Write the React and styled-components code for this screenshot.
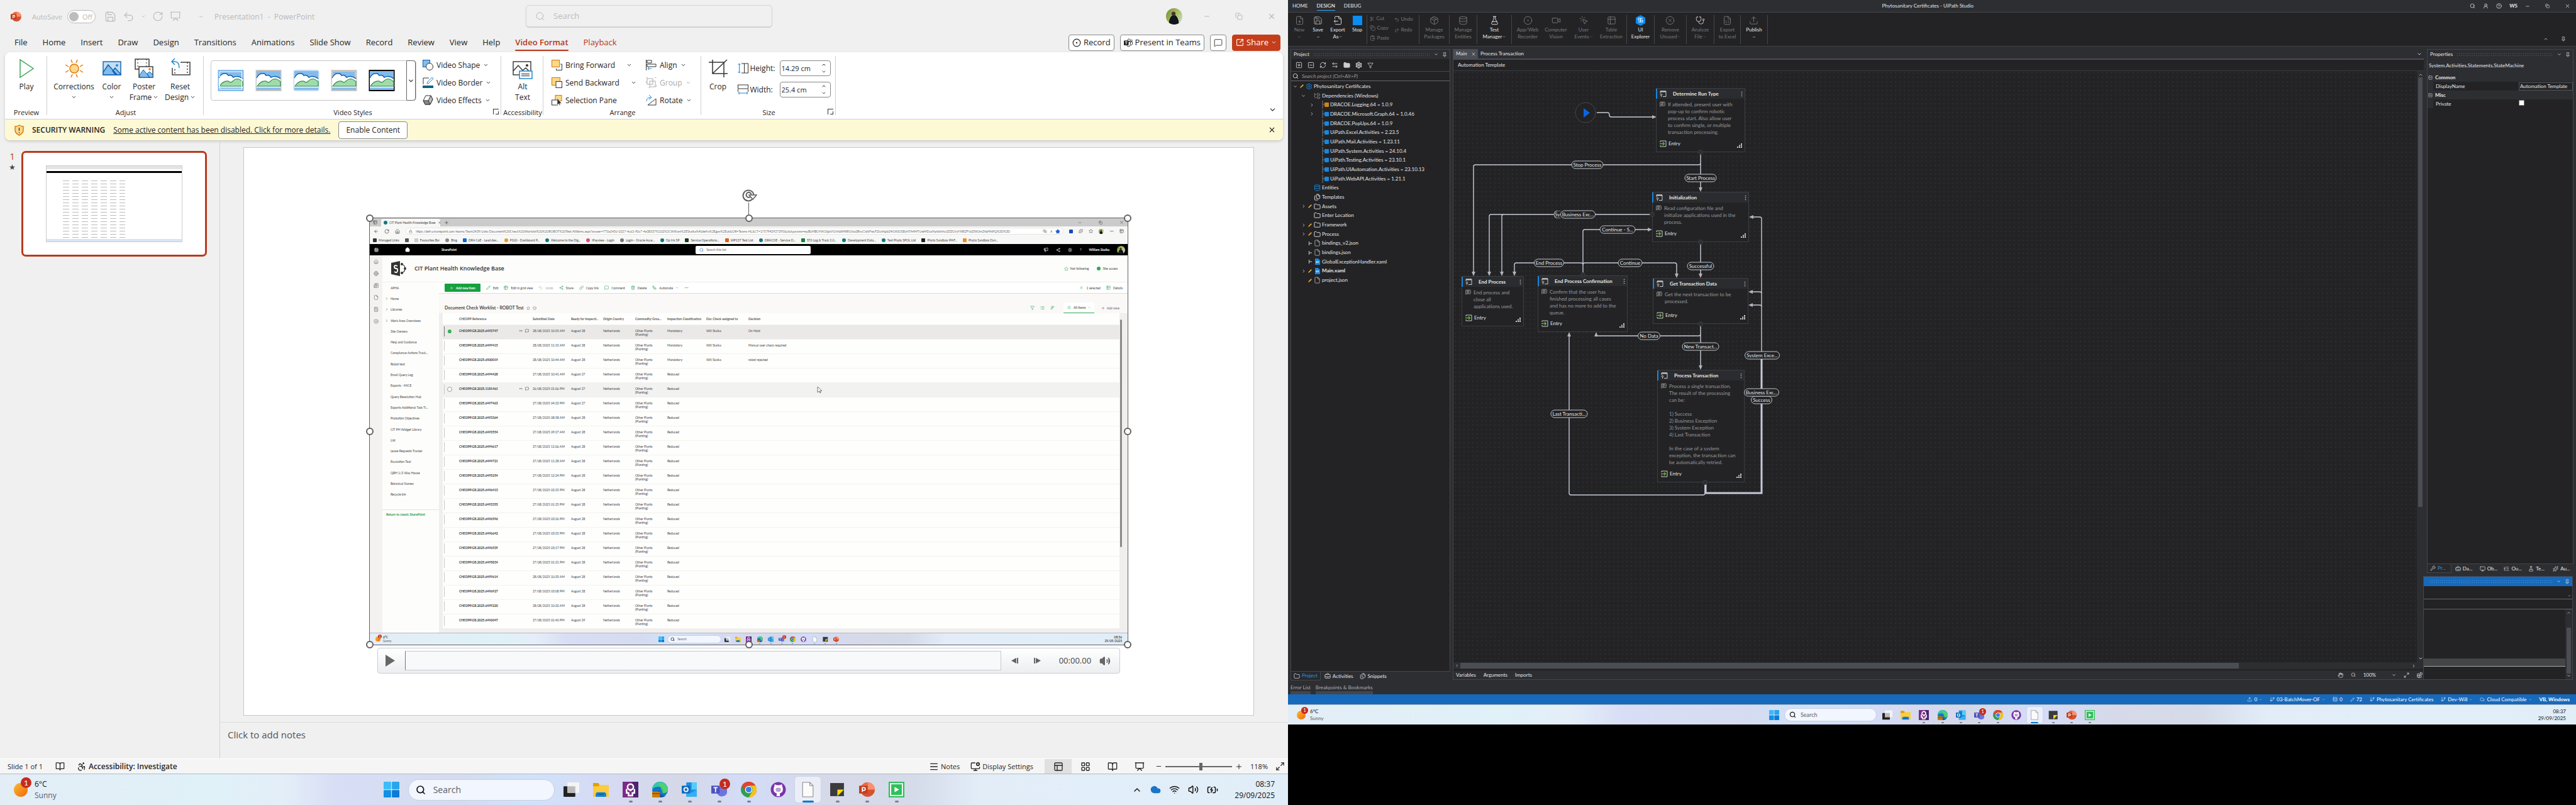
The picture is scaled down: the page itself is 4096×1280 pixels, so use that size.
import React from "react";
import styled, { createGlobalStyle, css } from "styled-components";
import {
  Save, Undo2, RotateCw, Presentation, Search, Minus, X, Copy, ChevronDown, ChevronUp, ChevronRight, ChevronLeft,
  BookOpen, Accessibility, LayoutGrid, Maximize2, Wifi, Volume2, BatteryCharging, Menu, MonitorCog,
  PanelsTopLeft, FilePlus, FileOutput, Scissors, ClipboardPaste, Redo2, Package, Database, FlaskConical,
  CircleDot, Video, MousePointerClick, Table2, CircleX, Stethoscope, FileSpreadsheet, Upload, Pin, Folder,
  Settings, Funnel, RefreshCw, ArrowLeftRight, SquarePlus, SquareMinus, MessageSquareText, Hand, Wrench,
  BriefcaseBusiness, ListTree, Sparkles, Monitor, CircleHelp, UserRound, Pencil, Cloud, GitBranch, Files,
  ArrowLeft, House, Lock, Plus, Globe, Star, Grid3x3, Share2, Link, MessageSquare, Trash2, Workflow, Ellipsis,
  ArrowDownWideNarrow, List, Newspaper, File, Calculator, CirclePlus, Megaphone, EyeOff, Puzzle, SquareArrowOutUpRight,
  Rows3, Blocks, FolderTree, CircleCheck,
} from "lucide-react";

const UI = `"Open Sans", "Noto Sans", sans-serif`;
const SMALL = `Lato, "Open Sans", sans-serif`;

const Global = createGlobalStyle`
  html, body, #root { height: 100%; }
  body { margin: 0; background: #000; font-family: ${UI}; }
  *, *::before, *::after { box-sizing: border-box; }
  button, input, select { font: inherit; color: inherit; margin: 0; }
  button { background: none; border: 0; padding: 0; }
  svg { display: block; flex: none; }
  a { color: inherit; }
`;

const Desktop = styled.div`display: flex; min-height: 100vh; white-space: nowrap;`;
const Spacer = styled.div`flex: 1;`;
const Gap = styled.div`flex: 0 0 ${(p) => p.$w}px;`;

/* ------------------------------------------------------------ app icons */
const Ic = ({ s, children }) => <svg width={s} height={s} viewBox="0 0 24 24">{children}</svg>;

const apps = {
  win: (s) => (
    <Ic s={s}><rect x="0" y="0" width="11.4" height="11.4" rx="1" fill="#3cbcf8" /><rect x="12.6" y="0" width="11.4" height="11.4" rx="1" fill="#29a5ee" />
      <rect x="0" y="12.6" width="11.4" height="11.4" rx="1" fill="#1190e4" /><rect x="12.6" y="12.6" width="11.4" height="11.4" rx="1" fill="#0a7bd8" /></Ic>
  ),
  task: (s) => <Ic s={s}><rect x="0" y="7" width="18" height="16" rx="1" fill="#222" /><rect x="6" y="1" width="18" height="16" rx="1" fill="#f4f4f4" /><rect x="6" y="7" width="12" height="10" fill="#bbb" /></Ic>,
  explorer: (s) => <Ic s={s}><path d="M0 2h8l2 3h14v18H0z" fill="#fccb3f" /><path d="M0 2h8l2 3-2 2H0z" fill="#e0a106" /><path d="M4 23v-5l2-2h12l2 2v5z" fill="#1180d6" /><path d="M8 19h8" stroke="#0b5a9e" strokeWidth="1.5" /></Ic>,
  purple: (s) => <Ic s={s}><rect width="24" height="24" fill="#7b2c86" /><path d="M15 0h9v24h-9z" fill="#4d2370" /><circle cx="12" cy="8" r="4.5" fill="none" stroke="#fff" strokeWidth="2.4" /><path d="M6 11v6h3v4h6v-4h3v-6" fill="none" stroke="#fff" strokeWidth="2.4" /><circle cx="12" cy="13" r="1.6" fill="#fff" /></Ic>,
  edge: (s) => <Ic s={s}><circle cx="12" cy="12" r="12" fill="#1474c8" /><path d="M0 12a12 12 0 0 1 24 0c0 4-4 6-8 5 2-3 1-8-4-9C6 7 2 9 0 12z" fill="#35c6a8" /><path d="M10 2a12 12 0 0 1 14 10c0 4-4 6-8 5z" fill="#5bd65a" opacity=".7" /><path d="M11 13c-1 6 4 10 10 8-6 5-15 2-14-5z" fill="#0c4f94" /><rect x="0" y="15" width="12" height="9" rx="1" fill="#c97c0a" /><path d="M0 18h12" stroke="#6b3d05" strokeWidth="1" /></Ic>,
  outlook: (s) => <Ic s={s}><rect x="7" y="1" width="16" height="22" fill="#1a8ee6" /><path d="M15 1h8v11h-8z" fill="#52cdf8" /><path d="M7 12l8 5 8-5v11H7z" fill="#36b0f0" /><rect x="0" y="6" width="13" height="12" rx="1" fill="#0f6cc0" /><circle cx="6.500" cy="12" r="3" fill="none" stroke="#fff" strokeWidth="1.8" /></Ic>,
  teams: (s) => <Ic s={s}><circle cx="17" cy="5" r="4" fill="#7b83eb" /><path d="M9 8h15v8a6 6 0 0 1-6 6 7 7 0 0 1-9-4z" fill="#6d75dd" /><rect x="0" y="6" width="13" height="12" rx="1" fill="#4b53bc" /><path d="M3.500 9h6M6.500 9v7" stroke="#fff" strokeWidth="1.7" /></Ic>,
  teamsMono: (s) => <Ic s={s}><circle cx="14" cy="5" r="3.500" fill="none" stroke="#262626" strokeWidth="1.500" /><circle cx="21" cy="6" r="2" fill="none" stroke="#262626" strokeWidth="1.300" /><path d="M12 9.500h11v6q0 3-4 3M18 9.500V16q0 6-5 6-4 0-5-3" fill="none" stroke="#262626" strokeWidth="1.500" /><rect x="0" y="6" width="13" height="13" rx="1" fill="#262626" /><path d="M3.500 9.500h6M6.500 9.500v7" stroke="#fff" strokeWidth="1.700" /></Ic>,
  chrome: (s) => <Ic s={s}><circle cx="12" cy="12" r="12" fill="#2fa04c" /><path d="M1.600 6A12 12 0 0 1 22.400 6H12a6 6 0 0 0-5.200 9z" fill="#e8402f" /><path d="M22.400 6A12 12 0 0 1 12 24l5.200-9a6 6 0 0 0-1-7.500L12 6z" fill="#fbc116" /><circle cx="12" cy="12" r="5.600" fill="#fff" /><circle cx="12" cy="12" r="4.400" fill="#3b7ded" /></Ic>,
  github: (s) => <Ic s={s}><circle cx="12" cy="12" r="11.500" fill="#7a35a8" /><path d="M5 12c0-3 .5-4 1.200-5-.3-1 0-2 .3-3 1.500 0 2.500 1 3 1.300h5c.5-.3 1.500-1.300 3-1.300.3 1 .6 2 .3 3 .7 1 1.200 2 1.200 5 0 4-2.500 5-4.500 5.500V22h-5v-4.500C7.500 17 5 16 5 12z" fill="#fff" /><path d="M8 12c0-3 2-3 4-3s4 0 4 3-2 3.500-4 3.500S8 15 8 12z" fill="#7a35a8" opacity=".5" /></Ic>,
  doc: (s) => <Ic s={s}><path d="M4 1h11l5 5v17H4z" fill="#fbfbfb" stroke="#888" strokeWidth="1" /><path d="M15 1v5h5" fill="none" stroke="#888" strokeWidth="1" /></Ic>,
  notes: (s) => <Ic s={s}><rect x="1" y="2" width="21" height="20" fill="#3b3b3b" /><path d="M12 12h10l-10 10z" fill="#fddb0c" /></Ic>,
  ppt: (s) => <Ic s={s}><circle cx="13" cy="12" r="11" fill="#d35230" /><path d="M13 1a11 11 0 0 1 11 11H13z" fill="#ff8f6b" /><path d="M13 1v11H2A11 11 0 0 1 13 1z" fill="#ed6c47" /><rect x="0" y="6" width="13" height="12" rx="1" fill="#c43e1c" /><path d="M5 15.500V9h2.500a2 2 0 0 1 0 4H5" fill="none" stroke="#fff" strokeWidth="1.600" /></Ic>,
  green: (s) => <Ic s={s}><rect width="24" height="24" fill="#2fbf5b" /><rect x="3" y="3" width="18" height="18" fill="none" stroke="#fff" strokeWidth="1.800" /><path d="M9 8l7 4-7 4z" fill="#fff" /></Ic>,
  sun: (s) => <Ic s={s}><defs><linearGradient id="sunny" x1="0" y1="0" x2="1" y2="1"><stop offset="0" stopColor="#f6bd31" /><stop offset="1" stopColor="#f4660b" /></linearGradient></defs><circle cx="12" cy="12" r="12" fill="url(#sunny)" /></Ic>,
};

/* ------------------------------------------------------------- taskbar */
const sizes = {
  lg: { h: 50, icon: 25, cell: 47, apps: 564, search: 233, sh: 34, gap: 3, font: 12, sfont: 14, line: 18, pad: 22, badge: 17, dot: 6, font2: UI, right: 21, tray: 16, trayGap: 13, doc: 41, sun: 22 },
  md: { h: 32, icon: 16, cell: 29, apps: 352, search: 147, sh: 21, gap: 2, font: 8, sfont: 9, line: 11, pad: 14, badge: 11, dot: 4, font2: SMALL, right: 16, tray: 9, trayGap: 6, doc: 26, sun: 14 },
  sm: { h: 19, icon: 9, cell: 17, apps: 191, search: 86, sh: 13, gap: 1, font: 5, sfont: 5, line: 6, pad: 9, badge: 6, dot: 2, font2: SMALL, right: 9, tray: 5, trayGap: 3, doc: 15, sun: 8 },
};
const Bar = styled.footer`
  position: relative; flex: none; display: flex; align-items: center; justify-content: center; height: ${(p) => p.$z.h}px;
  font: ${(p) => p.$z.font}px/${(p) => p.$z.line}px ${(p) => p.$z.font2}; color: #111; border-top: 1px solid #b3bac6;
  background: linear-gradient(90deg, #e3edf6 0%, #e0f1f8 17%, #e4eef8 22%, #d8def5 26%, #d5dcf1 36%, #cfe3fa 41%, #d6dbf5 46%, #d5d8e8 53%, #d3dcf8 58%, #d6d9e9 64%, #d5dbe9 71%, #e2edf8 76%, #e1eef8 100%);
`;
const Weather = styled.div`
  position: absolute; left: ${(p) => p.$z.pad}px; top: 0; bottom: 0; display: flex; align-items: center; gap: ${(p) => p.$z.sun / 2}px;
  span { display: block; } span + span { color: #5c5f66; }
`;
const SunBox = styled.div`position: relative;`;
const Badge = styled.i`
  position: absolute; right: -${(p) => Math.round(p.$z.badge / 3)}px; top: -${(p) => Math.round(p.$z.badge / 2)}px; width: ${(p) => p.$z.badge}px; height: ${(p) => p.$z.badge}px;
  ${(p) => p.$app && css`top: ${p.$z.gap}px; right: ${p.$z.gap * 2}px;`}
  border-radius: 50%; background: #c42b1c; color: #fff; text-align: center; font: ${(p) => p.$z.font}px/${(p) => p.$z.badge}px ${SMALL};
`;
const Center = styled.div`display: flex; align-items: center; gap: ${(p) => p.$z.gap}px;`;
const Apps = styled.div`display: flex; width: ${(p) => p.$z.apps}px;`;
const AppBtn = styled.button`
  position: relative; flex: 1; height: ${(p) => p.$z.doc}px; min-width: ${(p) => (p.$start ? p.$z.cell : 0)}px; display: flex; align-items: center; justify-content: center;
  ${(p) => p.$on && css`&::before { content: ""; position: absolute; inset: 0 ${p.$z.gap}px; border-radius: ${p.$z.gap + 2}px; background: rgba(255,255,255,.55); box-shadow: 0 0 0 1px #ccd5ea; }`}
  ${(p) => p.$dot && css`&::after { content: ""; position: absolute; bottom: 0; width: ${p.$on ? p.$z.dot * 3 : p.$z.dot}px; height: ${p.$z.dot / 2}px; border-radius: 2px; background: ${p.$on ? "#0078d4" : "#7d808a"}; }`}
  svg { position: relative; }
`;
const SearchPill = styled.label`
  width: ${(p) => p.$z.search}px; height: ${(p) => p.$z.sh}px; border-radius: ${(p) => p.$z.sh / 2}px; padding: 0 ${(p) => p.$z.sh / 3}px; background: #f2f6fe; border: 1px solid #c6cfe3;
  display: flex; align-items: center; gap: ${(p) => p.$z.sh / 3}px; font-size: ${(p) => p.$z.sfont}px;
  input { border: 0; background: none; padding: 0; width: 100%; min-width: 0; outline: 0; } input::placeholder { color: #5b5e66; opacity: 1; }
`;
const Tray = styled.div`position: absolute; right: ${(p) => p.$z.right}px; display: flex; align-items: center; gap: ${(p) => p.$z.trayGap}px; text-align: right; span { display: block; } time { margin-left: ${(p) => p.$z.trayGap}px; }`;

const appList = [["task", 0], ["explorer", 0], ["purple", 1], ["edge", 1], ["outlook", 1], ["teams", 1], ["chrome", 1], ["github", 0], ["doc", 1], ["notes", 1], ["ppt", 1], ["green", 1]];
function Taskbar({ size, time, tray, count = 12 }) {
  const z = sizes[size];
  return (
    <Bar $z={z}>
      <Weather $z={z}><SunBox>{apps.sun(z.sun)}<Badge $z={z}>1</Badge></SunBox><div><span>6°C</span><span>Sunny</span></div></Weather>
      <Center $z={z}>
        <AppBtn $z={z} $start aria-label="Start">{apps.win(z.icon)}</AppBtn>
        <SearchPill $z={z}><Search size={z.sfont + 2} strokeWidth={2.5} /><input aria-label="Search" placeholder="Search" /></SearchPill>
        <Apps $z={z}>
          {appList.slice(0, count).map(([n, dot]) => (
            <AppBtn key={n} $z={z} $dot={dot} $on={n === "doc" && size !== "sm"} aria-label={n}>
              {apps[n](z.icon)}{n === "teams" && <Badge $app $z={z}>1</Badge>}
            </AppBtn>
          ))}
        </Apps>
      </Center>
      <Tray $z={z}>
        {tray && <><ChevronUp size={16} /><Cloud size={17} fill="#1b74c8" color="#1b74c8" /><Wifi size={17} /><Volume2 size={17} /><BatteryCharging size={18} /></>}
        <time><span>{time}</span><span>29/09/2025</span></time>
      </Tray>
    </Bar>
  );
}

/* ---------------------------------------------------------- PowerPoint */
const Ppt = styled.section`flex: 1; min-width: 0; height: 100vh; display: flex; flex-direction: column; background: #f0f0f0; color: #262626; font-size: 12px; line-height: 17px;`;
const TitleBar = styled.header`position: relative; height: 52px; padding: 0 19px 0 17px; display: flex; align-items: center; color: #b9b9b9; font-size: 11px;`;
const Auto = styled.label`display: flex; align-items: center; gap: 8px; margin: 0 14px 0 17px;`;
const Switch = styled.button`display: flex; align-items: center; gap: 6px; width: 45px; height: 21px; border: 1px solid #b9b9b9; border-radius: 11px; background: #fff; padding: 0 2px; font-size: 11px; &::before { content: ""; width: 15px; height: 15px; border-radius: 50%; background: #bdbdbd; }`;
const Quick = styled.div`display: flex; align-items: center; gap: 10px; width: 175px; button { display: flex; }`;
const FileName = styled.span`font-size: 12px; white-space: pre;`;
const TopSearch = styled.label`
  position: absolute; left: calc(50% - 188px); width: 392px; top: 8px; height: 35px; border: 1px solid #d4d4d4; border-radius: 5px; box-shadow: 0 1px 1px #ccc; display: flex; align-items: center; gap: 13px; padding: 0 14px;
  input { border: 0; background: none; padding: 0; font-size: 13px; } input::placeholder { color: #bcbcbc; opacity: 1; }
`;
const Avatar = styled.span`width: ${(p) => p.$s}px; height: ${(p) => p.$s}px; flex: none; border-radius: 50%; background: radial-gradient(circle at 46% 34%, #4b342c 0 14%, transparent 16%), radial-gradient(ellipse at 48% 105%, #15151d 0 42%, transparent 44%), linear-gradient(120deg, #6f8b3a, #a8bd5c 50%, #cfe0d8);`;
const WinBtns = styled.div`display: flex; align-items: center; gap: 39px; margin-left: 33px; button { display: flex; }`;

const TabsRow = styled.nav`display: flex; align-items: center; height: 31px; padding: 0 12px 0 11px;`;
const Tab = styled.button`
  position: relative; padding: 0 12px; font-size: 13px; line-height: 29px; ${(p) => p.$c && css`color: #b5371a;`}
  ${(p) => p.$on && css`font-weight: 600; &::after { content: ""; position: absolute; left: 12px; right: 12px; bottom: 1px; height: 2px; background: #b5371a; border-radius: 1px; }`}
`;
const Actions = styled.div`display: flex; gap: 9px; align-items: center;`;
const ActBtn = styled.button`display: flex; align-items: center; justify-content: center; gap: 4px; height: 26px; padding: 0 5px; border-radius: 4px; border: 1px solid ${(p) => (p.$red ? "#c43e1c" : "#8a8a8a")}; background: ${(p) => (p.$red ? "#c43e1c" : "#fff")}; color: ${(p) => (p.$red ? "#fff" : "#262626")}; font-size: 13px;`;

const Shell = styled.div`margin: 0 8px; border-radius: 8px; background: #fff; box-shadow: 0 2px 4px #c9c9c9; overflow: hidden; flex: none;`;
const Ribbon = styled.div`position: relative; display: flex; height: 107px; padding: 6px 0 6px; border-bottom: 1px solid #d0d0d0;`;
const Group = styled.div`position: relative; width: ${(p) => p.$w}px; padding-left: 2px; border-right: 1px solid #d0d0d0; display: flex; flex-direction: column;`;
const GroupBody = styled.div`flex: 1; display: flex; justify-content: center; gap: ${(p) => p.$gap || 0}px;`;
const GroupName = styled.div`text-align: center; font-size: 11px; line-height: 9px;`;
const Launcher = styled.button`position: absolute; right: 3px; bottom: 1px; width: 9px; height: 9px; border: solid #333; border-width: 1px 0 0 1px; &::after { content: ""; position: absolute; right: 0; bottom: 0; width: 5px; height: 5px; border: solid #333; border-width: 0 1px 1px 0; }`;
const Big = styled.button`width: ${(p) => p.$w}px; display: flex; flex-direction: column; align-items: center; font-size: 12px; line-height: 17px; svg.pic { height: 40px; } span { display: flex; align-items: center; justify-content: center; gap: 2px; min-height: 17px; }`;
const Gallery = styled.div`display: flex; align-items: center; width: 327px; height: 64px; margin-top: 7px; border: 1px solid #c6c6c6; border-radius: 4px; padding-left: 10px; gap: 18px;`;
const More = styled.button`width: 25px; height: 64px; border: 1px solid #666; border-radius: 0 4px 4px 0; display: flex; align-items: center; justify-content: center; margin-left: auto;`;
const Stack = styled.div`display: flex; flex-direction: column; justify-content: flex-start; width: ${(p) => p.$w}px;`;
const Item = styled.button`display: flex; align-items: center; gap: 5px; height: 28px; opacity: ${(p) => (p.$off ? 0.4 : 1)}; .far { margin-left: 13px; }`;
const SizeStack = styled.div`display: flex; flex-direction: column; gap: 9px; margin: 7px 0 0 14px;`;
const Field = styled.label`display: flex; align-items: center; gap: 3px; height: 25px; span { width: 44px; }`;
const Spin = styled.div`display: flex; align-items: center; justify-content: space-between; width: 81px; height: 25px; border: 1px solid #888; border-radius: 4px; padding: 0 6px 0 2px; input { border: 0; background: none; width: 56px; padding: 0; font-size: 11px; } div { display: flex; flex-direction: column; gap: 3px; } button { display: flex; }`;
const Collapse = styled.button`position: absolute; right: 10px; bottom: 8px;`;

const Warning = styled.div`display: flex; align-items: center; height: 33px; background: #fef9d5; padding: 0 11px 0 15px; gap: 13px; b { font-weight: 600; }`;
const Enable = styled.button`height: 28px; padding: 0 11px; border: 1px solid #888; border-radius: 4px; background: #fff;`;

const Work = styled.div`flex: 1; min-height: 0; display: flex;`;
const Thumbs = styled.aside`width: 350px; border-right: 1px solid #d4d4d4; padding: 17px 20px 0 14px; display: flex; align-items: flex-start; gap: 9px; color: #b5371a; font-size: 14px;`;
const ThumbNo = styled.div`width: 11px; text-align: center; span { display: block; font-size: 12px; color: #444; }`;
const Thumb = styled.div`flex: 1; aspect-ratio: 295 / 168; border: 3px solid #b83b1e; border-radius: 7px; background: #fff; padding: 20px 36px; overflow: hidden;`;
const Mini = styled.div`height: 100%; display: flex; flex-direction: column; border: 1px solid #ccc; background: #fff;`;
const MiniBar = styled.div`height: ${(p) => p.$h}px; background: ${(p) => p.$c};`;
const MiniRows = styled.div`flex: 1; margin: 12px 90px 0 26px; background: repeating-linear-gradient(180deg, transparent 0 1px, #fff 1px 5px), repeating-linear-gradient(90deg, #bbb 0 10px, transparent 10px 15px);`;
const Editor = styled.main`flex: 1; min-width: 0; display: flex; flex-direction: column;`;
const SlideWrap = styled.div`padding: 11px 54px 12px 37px; flex: 1; min-height: 0; border-bottom: 1px solid #dcdcdc;`;
const Slide = styled.div`background: #fff; border: 1px solid #c8c8c8; aspect-ratio: 16 / 9; padding: 111px calc(12.5% - 2px) 0;`;
const Notes = styled.div`height: 57px; padding: 11px 12px; font-size: 15px; line-height: 17px; color: #555;`;

const Status = styled.div`flex: none; height: 24px; border-top: 1px solid #fff; background: #f5f5f5; display: flex; align-items: center; padding: 0 5px 0 12px; font-size: 11px; b { font-weight: 600; font-size: 12px; }`;
const SBtn = styled.button`display: flex; align-items: center; justify-content: center; gap: 3px; height: 23px; margin-left: ${(p) => p.$m || 0}px; ${(p) => p.$cell && css`width: 43px;`} ${(p) => p.$on && css`background: #e0e0e0;`}`;
const Zoom = styled.input`appearance: none; width: 106px; height: 12px; margin: 0 5px; background: linear-gradient(#666, #666) center / 100% 2px no-repeat; &::-webkit-slider-thumb { appearance: none; width: 5px; height: 12px; background: #666; }`;

const Chev = ({ s = 9, className }) => <ChevronDown size={s} strokeWidth={2.5} className={className} />;

const pics = {
  play: <svg className="pic" width="30" viewBox="0 0 30 40"><path d="M5 6v28l21-14z" fill="none" stroke="#3aa757" strokeWidth="1.500" /></svg>,
  sun: <svg className="pic" width="30" viewBox="0 0 30 40"><circle cx="15" cy="20" r="7" fill="#f9d98c" stroke="#e07207" strokeWidth="1.400" /><path d="M12 11l-2-5M18 11l2-5M12 29l-2 5M18 29l2 5M6 17l-5-3M24 17l5-3M6 23l-5 3M24 23l5 3" stroke="#e07207" strokeWidth="1.400" /></svg>,
  color: <svg className="pic" width="30" viewBox="0 0 30 40"><rect x="1" y="9" width="28" height="21" fill="#c2ddf5" stroke="#0f62b0" strokeWidth="1.400" /><path d="M1 26l8-12 14 16H1zM16 24l4-5 9 10v1h-8z" fill="#83bbec" stroke="#0f62b0" strokeWidth="1.400" /><circle cx="23" cy="15" r="2" fill="#1f8bd0" /></svg>,
  poster: <svg className="pic" width="30" viewBox="0 0 30 40"><rect x="1" y="5" width="22" height="16" fill="#fafafa" stroke="#333" strokeWidth="1.400" /><path d="M5 5v16M19 5v16" stroke="#333" strokeDasharray="2 3" /><rect x="7" y="17" width="22" height="17" fill="#fff" stroke="#333" strokeWidth="1.400" /><path d="M8 30l6-8 10 12H8zM20 28l4-3 5 5v4h-6z" fill="#83bbec" stroke="#0f62b0" /><circle cx="24" cy="21" r="1.700" fill="#e07207" /></svg>,
  reset: <svg className="pic" width="32" viewBox="0 0 32 40"><rect x="3" y="10" width="28" height="20" fill="#fafafa" stroke="#333" strokeWidth="1.400" /><path d="M7 16v14M27 10v20" stroke="#333" strokeWidth="1.400" strokeDasharray="2 3" /><path d="M0 5h16v14H0z" fill="#fff" /><path d="M7 4L2 9l5 5M2 9h5q7 0 7 10" fill="none" stroke="#1f8bd0" strokeWidth="1.500" /></svg>,
  alt: <svg className="pic" width="32" viewBox="0 0 32 40"><rect x="1" y="9" width="28" height="21" fill="#fafafa" stroke="#333" strokeWidth="1.400" /><path d="M1 24l8-9 7 8 5-4 8 8" fill="none" stroke="#333" strokeWidth="1.400" /><circle cx="23" cy="15" r="2" fill="#333" /><rect x="11" y="24" width="20" height="12" fill="#fff" stroke="#1f8bd0" strokeWidth="1.500" /><path d="M14 28.500h13M14 31.500h13" stroke="#666" strokeWidth="1.300" /></svg>,
  crop: <svg className="pic" width="30" viewBox="0 0 30 40"><path d="M0 10h24v24M6 6v22h24M6 28L29 6" fill="none" stroke="#333" strokeWidth="1.500" /></svg>,
};
const S = ({ children }) => <svg width="17" height="17" viewBox="0 0 17 17" fill="none">{children}</svg>;
const small = {
  shape: <S><rect x="0.500" y="0.500" width="11" height="11" fill="#83bbec" stroke="#0f62b0" /><circle cx="11" cy="11" r="5.500" fill="#fafafa" stroke="#333" /></S>,
  border: <S><path d="M10 1H1v10" stroke="#333" /><path d="M7 10l1-3 7-7 2 2-7 7z" fill="#fff" stroke="#1f8bd0" /><rect y="13" width="17" height="4" fill="#12617f" /></S>,
  effects: <S><path d="M1 9l4-8h8l3 6-4 8H4z" fill="#fafafa" stroke="#333" /><path d="M1 9h8l3 6H4z" fill="#8a8a8a" stroke="#333" /><path d="M9 9l4-8 3 6-4 8z" fill="#bbb" stroke="#333" /></S>,
  fwd: <S><path d="M14 7h2.500v9.500h-9V14" stroke="#333" /><rect x="0.500" y="0.500" width="12" height="11" fill="#f9d98c" stroke="#e07207" /></S>,
  back: <S><rect x="0.500" y="0.500" width="13" height="12" fill="#f9d98c" stroke="#e07207" /><rect x="7" y="6.500" width="9.500" height="10" fill="#fff" stroke="#333" /></S>,
  sel: <S><rect x="6" y="0.500" width="10" height="9" fill="#f9d98c" stroke="#e07207" /><rect x="0.500" y="8" width="9" height="8" fill="#fff" stroke="#333" /><path d="M9 5v11l2.500-2 1.500 3 1-1-1-2.500h3z" fill="#333" stroke="#fff" strokeWidth="0.500" /></S>,
  align: <S><path d="M0.500 0v17M2 1h7v4H2zM2 7h14v4H2z" stroke="#333" fill="#fff" /><path d="M9 14H3M5 12l-2 2 2 2" stroke="#1f8bd0" /></S>,
  group: <S><rect x="2" y="2" width="9" height="9" stroke="#333" /><rect x="6" y="6" width="9" height="9" stroke="#333" /><rect x="0.500" y="0.500" width="16" height="16" stroke="#333" strokeDasharray="2 12" /></S>,
  rotate: <S><path d="M1 10q0-6 7-6M5 0l4 4-4 3" stroke="#1f8bd0" /><path d="M16 6v10H3z" stroke="#333" /></S>,
  h: <S><path d="M2.500 1v15M0.500 3l2-2 2 2M0.500 14l2 2 2-2" stroke="#1f8bd0" /><path d="M6 1h4M6 16h4" stroke="#333" /><rect x="10.500" y="1" width="6" height="15" stroke="#333" /></S>,
  w: <S><rect x="0.500" y="1" width="16" height="6" stroke="#333" /><path d="M0.500 8v4M16.500 8v4" stroke="#333" /><path d="M1 14h15M3 12l-2 2 2 2M14 12l2 2-2 2" stroke="#1f8bd0" /></S>,
};
const Style = ({ k }) => (
  <svg width="42" height="36" viewBox="0 0 42 36">
    <rect x="0.500" y="1" width="41" height="34" rx={k === 2 ? 4 : 0} fill={k === 1 || k === 3 ? "#c9c6c3" : k === 4 ? "#000" : k === 2 ? "#c2ddf5" : "#83bbec"} />
    <rect x={k === 3 ? 4 : 2} y={k === 3 ? 4 : 3} width={k === 3 ? 34 : 38} height={k === 3 ? 28 : 30} fill="#83bbec" />
    <path d="M2 14q4-8 9-7 4-1 6 3 5-2 8 3 7-4 15 2v12H2z" fill="#fff" />
    <path d="M2 14q4-8 9-7 4-1 6 3 5-2 8 3 7-4 15 2" fill="none" stroke="#0f62b0" strokeWidth="1.500" />
    <path d="M3 27q6-9 14-8 3 3 6 1 8-9 17 0v7z" fill="#a0dcaa" stroke="#2e8b4a" strokeWidth="1.200" />
    <path d="M2 28.500h38v4.500H2z" fill="#83bbec" /><path d="M2 28.500h38" stroke="#fff" strokeWidth="1.500" />
    {k === 0 && <rect x="3.500" y="4" width="35" height="28" fill="none" stroke="#fff" />}
  </svg>
);
const menu = ["File", "Home", "Insert", "Draw", "Design", "Transitions", "Animations", "Slide Show", "Record", "Review", "View", "Help"];

function PptRibbon() {
  return (
    <Ribbon>
      <Group $w={67}><GroupBody><Big>{pics.play}<span>Play</span></Big></GroupBody><GroupName>Preview</GroupName></Group>
      <Group $w={249}>
        <GroupBody>
          <Big $w={70}>{pics.sun}<span>Corrections</span><span><Chev /></span></Big>
          <Big $w={50}>{pics.color}<span>Color</span><span><Chev /></span></Big>
          <Big $w={53}>{pics.poster}<span>Poster</span><span>Frame <Chev /></span></Big>
          <Big $w={62}>{pics.reset}<span>Reset</span><span>Design <Chev /></span></Big>
        </GroupBody>
        <GroupName>Adjust</GroupName>
      </Group>
      <Group $w={473}>
        <GroupBody $gap={10}>
          <Gallery>{[0, 1, 2, 3, 4].map((k) => <Style k={k} key={k} />)}<More aria-label="More styles"><Chev s={11} /></More></Gallery>
          <Stack $w={115}>
            <Item>{small.shape}Video Shape<Chev /></Item><Item>{small.border}Video Border<Chev /></Item><Item>{small.effects}Video Effects<Chev /></Item>
          </Stack>
        </GroupBody>
        <GroupName>Video Styles</GroupName><Launcher aria-label="Video options" />
      </Group>
      <Group $w={67}><GroupBody><Big>{pics.alt}<span>Alt</span><span>Text</span></Big></GroupBody><GroupName>Accessibility</GroupName></Group>
      <Group $w={251}>
        <GroupBody>
          <Stack $w={150}>
            <Item>{small.fwd}Bring Forward<Chev className="far" /></Item><Item>{small.back}Send Backward<Chev className="far" /></Item><Item>{small.sel}Selection Pane</Item>
          </Stack>
          <Stack $w={76}>
            <Item>{small.align}Align<Chev /></Item><Item $off>{small.group}Group<Chev /></Item><Item>{small.rotate}Rotate<Chev /></Item>
          </Stack>
        </GroupBody>
        <GroupName>Arrange</GroupName>
      </Group>
      <Group $w={214}>
        <GroupBody>
          <Big $w={34}>{pics.crop}<span>Crop</span></Big>
          <SizeStack>
            <Field>{small.h}<span>Height:</span><Spin><input aria-label="Height" defaultValue="14.29 cm" /><div><button aria-label="Increase height"><ChevronUp size={8} strokeWidth={3} /></button><button aria-label="Decrease height"><Chev s={8} /></button></div></Spin></Field>
            <Field>{small.w}<span>Width:</span><Spin><input aria-label="Width" defaultValue="25.4 cm" /><div><button aria-label="Increase width"><ChevronUp size={8} strokeWidth={3} /></button><button aria-label="Decrease width"><Chev s={8} /></button></div></Spin></Field>
          </SizeStack>
        </GroupBody>
        <GroupName>Size</GroupName><Launcher aria-label="Size options" />
      </Group>
      <Collapse aria-label="Collapse ribbon"><ChevronDown size={13} /></Collapse>
    </Ribbon>
  );
}

/* ------------------------------------------- recorded SharePoint window */
const Frame = styled.div`position: relative; border: 1px solid #606060; height: 680px; display: flex; flex-direction: column; background: #fdfdfc; font: 5px/6px ${SMALL}; color: #444;`;
const Handle = styled.i`position: absolute; left: ${(p) => p.$x}; top: ${(p) => p.$y}; width: 12px; height: 12px; margin: -6px; border: 2px solid #606060; border-radius: 50%; background: #fff;`;
const Rotate = styled.div`position: absolute; left: 50%; top: -47px; height: 41px; width: 24px; margin-left: -12px; display: flex; flex-direction: column; align-items: center; &::after { content: ""; flex: 1; width: 1px; background: #606060; }`;
const BTabs = styled.div`height: 13px; background: #cbcbcb; display: flex; align-items: flex-end; padding: 0 6px 0 5px; gap: 6px; svg { align-self: center; }`;
const BTab = styled.div`height: 12px; width: 94px; border-radius: 3px 3px 0 0; background: #f7f7f6; display: flex; align-items: center; padding: 0 4px; gap: 3px; svg:last-child { margin-left: auto; }`;
const Url = styled.div`height: 15px; background: #f7f7f6; display: flex; align-items: center; padding: 0 6px; gap: 9px;`;
const UrlBox = styled.div`flex: 1; min-width: 0; height: 11px; border-radius: 6px; background: #fff; border: 1px solid #e5e5e5; display: flex; align-items: center; gap: 5px; padding: 0 4px; color: #666; span { flex: 1; min-width: 0; overflow: hidden; }`;
const Marks = styled.div`height: 13px; background: #f7f7f6; display: flex; align-items: center; padding: 0 5px; gap: 9px; span { display: flex; align-items: center; gap: 3px; }`;
const Sq = styled.i`width: 6px; height: 6px; border-radius: ${(p) => (p.$r ? 3 : 1)}px; background: ${(p) => p.$c}; flex: none;`;
const Suite = styled.div`height: 18px; background: #000; color: #fff; display: flex; align-items: center; padding: 0 4px 0 7px; position: relative; gap: 12px;`;
const SuiteSearch = styled.label`position: absolute; left: 43%; width: 183px; height: 13px; border-radius: 2px; background: #fff; display: flex; align-items: center; gap: 4px; padding: 0 6px; color: #2c6fb8; input { border: 0; padding: 0; width: 100%; background: none; } input::placeholder { color: #666; opacity: 1; }`;
const Site = styled.div`flex: 1; min-height: 0; display: flex;`;
const Rail = styled.div`width: 20px; background: #f3f2f1; display: flex; flex-direction: column; align-items: center; padding-top: 6px; gap: 11px; color: #777;`;
const SiteMain = styled.div`flex: 1; min-width: 0; display: flex; flex-direction: column;`;
const SiteHead = styled.div`height: 43px; padding: 0 16px 0 14px; display: flex; align-items: center; gap: 13px; border-bottom: 1px solid #eee; h2 { margin: 0; font: 600 9px/12px ${UI}; color: #333; } span { display: flex; align-items: center; gap: 3px; }`;
const Row = styled.div`flex: 1; min-height: 0; display: flex;`;
const Side = styled.nav`width: 90px; ul { list-style: none; margin: 0; padding: 0; height: 346px; display: grid; grid-auto-rows: 1fr; } li { display: flex; align-items: center; padding-left: 4px; gap: 3px; } li svg, li i { width: 6px; } > a { display: block; margin-top: 15px; padding: 4px 6px; border-top: 1px solid #e5e5e5; color: #1a9a48; text-decoration: none; font-weight: 700; }`;
const Content = styled.div`flex: 1; min-width: 0; background: #faf9f8; display: flex; flex-direction: column;`;
const Cmds = styled.div`height: 18px; background: #fff; border-bottom: 1px solid #dcdcdc; display: flex; align-items: center; padding: 0 8px 0 9px; gap: 9px; color: #444; svg { color: #2fa958; }`;
const Cmd = styled.button`display: flex; align-items: center; gap: 4px; opacity: ${(p) => (p.$off ? 0.5 : 1)};`;
const AddBtn = styled.button`display: flex; align-items: center; justify-content: center; gap: 4px; width: 57px; height: 13px; border-radius: 1px; background: #17a03f; color: #fff; font-weight: 700; svg { color: #fff; }`;
const ListHead = styled.div`height: 31px; display: flex; align-items: flex-end; padding: 0 13px 0 9px; gap: 4px; color: #666; h3 { margin: 0; font: 600 7px/17px ${SMALL}; color: #333; } svg { margin-bottom: 5px; }`;
const View = styled.div`width: 49px; height: 17px; background: #fff; display: flex; align-items: center; justify-content: center; gap: 4px; border-bottom: 1px solid #2fa958; font-weight: 700; margin-left: 10px; svg { margin: 0; }`;
const AddView = styled.button`display: flex; align-items: center; gap: 3px; height: 17px; width: 36px; justify-content: flex-end; svg { margin: 0; }`;
const Card = styled.div`position: relative; flex: 1; min-height: 0; overflow: hidden; padding: 0 13px 0 6px; background: #f0efee;`;
const Scroll = styled.i`position: absolute; right: 9px; top: 10px; width: 3px; height: 362px; border-radius: 2px; background: #8a8a8a;`;
const Grid = styled.table`width: 100%; table-layout: fixed; border-collapse: collapse; background: #fefefd; th { height: 18px; font-weight: 700; text-align: left; padding: 0; color: #555; } td { height: 23px; padding: 6px 0 0; vertical-align: top; border-top: 1px solid #f3f2f1; } td:nth-child(2) { font-weight: 700; color: #333; }`;
const GTr = styled.tr`background: ${(p) => p.$bg};`;
const Mark = styled.div`display: flex; align-items: center; gap: 4px; margin: -4px 0 0 2px; height: 16px; &::before { content: ""; width: 1px; height: 16px; background: ${(p) => (p.$on ? "#777" : "#c8c8c8")}; }`;
const Opt = styled.span`float: right; margin-right: 6px; display: flex; gap: 4px;`;
const Cursor = styled.svg`position: absolute; left: 59%; top: 267px;`;
const Player = styled.div`margin: 4px 13px 0; height: 41px; border: 1px solid #c8cdd3; border-radius: 4px; background: linear-gradient(#fff, #eceef0); display: flex; align-items: center; padding: 0 14px 0 12px; font: 13px/17px ${UI}; color: #444; button { display: flex; }`;
const Track = styled.div`flex: 1; height: 31px; margin: 0 16px 0 15px; border: 1px solid #c4c9d0; border-left-color: #777; background: #f8f9fb;`;

const marks = [["Managed Links", "#333"], ["", "#555"], ["Favourites Bar", "#ccc"], ["Bing", "#888", 1], ["DRA CoE - Lead dev...", "#0c66d6"], ["P100 - Dashboard P...", "#e79b2a", 1], ["Welcome to the Dig...", "#0b7a84", 1], ["iPayview - Login", "#e04a78", 1], ["Login - Oracle Acce...", "#777", 1], ["Op Iris SP", "#0b7a84", 1], ["Service Operations...", "#123d1c"], ["WP137 Test List", "#e05a18"], ["DRACOE - Service D...", "#0b7a84", 1], ["ST0 Log & Track 2.0...", "#15803d"], ["Development Data...", "#0b7a84", 1], ["Test Phyto SPOL List", "#0b7a84", 1], ["Phyto Sandbox IPAF...", "#222"], ["Phyto Sandbox Dyn...", "#f08a24"]];
const sideItems = ["APHA", ">Home", ">Libraries", ">Work Area Overviews", "Site Owners", "Help and Guidance", "Compliance Actions Track...", "Robot test", "Email Query Log", "Exports - MICE", "Query Resolution Hub", "Exports Additional Task Ti...", "Probation Objectives", "CIT PH Widget Library", "List", "Leave Requests Tracker", "Escalation Tool", "QRH 1/2 Way House", "Botanical Names", "Recycle bin"];
const rows = [
  ["6493747", "28/08/2025 10:55 AM", "28", "Mandatory", "Will Skalka", "On Hold"],
  ["6499415", "28/08/2025 11:15 AM", "28", "Mandatory", "Will Skalka", "Manual user check required"],
  ["6500019", "28/08/2025 10:44 AM", "28", "Mandatory", "Will Skalka", "robot rejected"],
  ["6494428", "27/08/2025 10:41 AM", "27"], ["1181461", "26/08/2025 01:06 PM", "27"], ["6497463", "27/08/2025 04:22 PM", "27"],
  ["6493364", "27/08/2025 08:58 AM", "28"], ["6493554", "27/08/2025 09:27 AM", "28"], ["6494617", "27/08/2025 11:06 AM", "28"],
  ["6494721", "27/08/2025 11:28 AM", "28"], ["6495254", "27/08/2025 12:24 PM", "28"], ["6496413", "27/08/2025 02:25 PM", "28"],
  ["6493355", "27/08/2025 01:25 PM", "28"], ["6496596", "27/08/2025 03:26 PM", "28"], ["6496642", "27/08/2025 03:25 PM", "28"],
  ["6496539", "27/08/2025 03:17 PM", "28"], ["6495834", "27/08/2025 01:21 PM", "28"], ["6499614", "28/08/2025 10:35 AM", "28"],
  ["6496927", "27/08/2025 03:08 PM", "28"], ["6499220", "28/08/2025 10:20 AM", "28"], ["6496047", "27/08/2025 01:40 PM", "29"],
];
const cols = [26, 117, 61, 51, 51, 51, 62, 67];
const heads = ["", "CHEDPP Reference", "Submitted Date", "Ready for Inspecti...", "Origin Country", "Commodity Grou...", "Inspection Classification", "Doc Check assigned to", "Decision"];
const url = "https://defra.sharepoint.com/teams/Team2439/Lists/Document%20Check%20Worklist%20%20ROBOT%20Test/AllItems.aspx?ovuser=770a2450-0227-4c62-90c7-4e38537f1102%2CWilliam%2ESkalka%40defra%2Egov%2Euk&OR=Teams-HL&CT=1757942927295&clickparams=eyJBcHBOYW1lIjoiVGVhbXMtRGVza3RvcCIsIkFwcFZlcnNpb24iOiI0OS8yNTA4MTUwMDcxNyIsIkhhc0ZlZGVyYXRlZFVzZXIiOmZhbHNlfQ%3D%3D";

function Recording() {
  return (
    <Frame>
      <BTabs><PanelsTopLeft size={7} /><BTab><Sq $c="#0b7a84" $r />CIT Plant Health Knowledge Base<X size={6} /></BTab><Plus size={8} /><Spacer /><Minus size={6} /><Gap $w={15} /><Copy size={6} /><Gap $w={15} /><X size={7} /></BTabs>
      <Url><ArrowLeft size={8} /><RotateCw size={8} /><House size={8} />
        <UrlBox><Lock size={6} /><span>{url}</span><EyeOff size={7} /><i>A</i><Star size={8} fill="#1a56d6" color="#1a56d6" /></UrlBox>
        <Sq $c="#1848b8" /><Puzzle size={7} /><Star size={7} /><Avatar $s={8} /><Ellipsis size={7} /><PanelsTopLeft size={7} /></Url>
      <Marks>{marks.map(([t, c, r], i) => <span key={i}><Sq $c={c} $r={r} />{t}</span>)}</Marks>
      <Suite><Grid3x3 size={7} /><Gap $w={18} /><House size={8} fill="#fff" /><Gap $w={26} /><b>SharePoint</b>
        <SuiteSearch><Search size={7} /><input aria-label="Search this list" placeholder="Search this list" /></SuiteSearch>
        <Spacer /><Megaphone size={8} /><Share2 size={7} /><Settings size={7} /><span>?</span><b>William Skalka</b><Avatar $s={13} /></Suite>
      <Site>
        <Rail><House size={8} /><Globe size={8} /><Newspaper size={8} /><File size={8} /><Calculator size={8} /><CirclePlus size={8} /></Rail>
        <SiteMain>
          <SiteHead>
            <svg width="24" height="24" viewBox="0 0 24 24"><path d="M0 3l14-3v24L0 21z" fill="#333" /><path d="M10 8q-5-2-5 1t3 3 2 4-5 1" fill="none" stroke="#fff" strokeWidth="1.800" /><path d="M16 5q6 1 6 7t-6 7" fill="none" stroke="#333" strokeWidth="1.200" /><circle cx="17" cy="5" r="2" fill="#333" /><circle cx="22" cy="12" r="2" fill="#333" /><circle cx="17" cy="19" r="2" fill="#333" /></svg>
            <h2>CIT Plant Health Knowledge Base</h2><Spacer /><span><Star size={7} color="#2fa958" />Not following</span><span><Sq $c="#2fa958" $r />Site access</span>
          </SiteHead>
          <Row>
            <Side><ul>{sideItems.map((t) => <li key={t}>{t[0] === ">" ? <ChevronRight size={6} /> : <i />}{t.replace(">", "")}</li>)}</ul><a href="#classic">Return to classic SharePoint</a></Side>
            <Content>
              <Cmds>
                <AddBtn><Plus size={6} />Add new item</AddBtn><Cmd><Pencil size={7} />Edit</Cmd><Cmd><Table2 size={7} />Edit in grid view</Cmd><Cmd $off><Undo2 size={7} />Undo</Cmd><Cmd><Share2 size={7} />Share</Cmd><Cmd><Link size={7} />Copy link</Cmd><Cmd><MessageSquare size={7} />Comment</Cmd><Cmd><Trash2 size={7} />Delete</Cmd><Cmd><Workflow size={7} />Automate<Chev s={5} /></Cmd><Ellipsis size={7} />
                <Spacer /><Cmd><X size={7} />1 selected</Cmd><Cmd><PanelsTopLeft size={7} />Details</Cmd>
              </Cmds>
              <ListHead><h3>Document Check Worklist - ROBOT Test</h3><Star size={6} /><CircleCheck size={6} /><Spacer /><Funnel size={7} color="#2fa958" /><Gap $w={1} /><List size={7} color="#2fa958" /><Gap $w={1} /><ArrowDownWideNarrow size={7} color="#2fa958" /><View><Menu size={6} color="#2fa958" />All Items<Chev s={4} /></View><AddView><Plus size={6} />Add view</AddView></ListHead>
              <Card>
                <Grid>
                  <colgroup>{cols.map((w, i) => <col key={i} width={w} />)}<col /></colgroup>
                  <thead><tr>{heads.map((h, i) => <th key={i}>{h}</th>)}</tr></thead>
                  <tbody>
                    {rows.map((r, i) => (
                      <GTr key={r[0]} $bg={i === 0 ? "#ebe9e7" : i === 4 ? "#f2f2f1" : "transparent"}>
                        <td><Mark $on={i === 0}>{i === 0 && <CircleCheck size={8} fill="#17a03f" color="#fff" />}{i === 4 && <svg width="8" height="8"><circle cx="4" cy="4" r="3.500" fill="#fff" stroke="#999" /></svg>}</Mark></td>
                        <td>CHEDPP.GB.2025.{r[0]}{(i === 0 || i === 4) && <Opt><Ellipsis size={6} /><MessageSquare size={6} /></Opt>}</td>
                        <td>{r[1]}</td><td>August {r[2]}</td><td>Netherlands</td><td>Other Plants<br />(Planting)</td><td>{r[3] || "Reduced"}</td><td>{r[4]}</td><td>{r[5]}</td>
                      </GTr>
                    ))}
                  </tbody>
                </Grid>
                <Scroll />
              </Card>
            </Content>
          </Row>
        </SiteMain>
      </Site>
      <Taskbar size="sm" time="08:36" count={11} />
      <Cursor width="9" height="12" viewBox="0 0 9 12"><path d="M1 1v9l2.500-2 1.500 3 1-.5L4.700 7.500H8z" fill="#fff" stroke="#555" strokeWidth=".8" /></Cursor>
      {["0%", "50%", "100%"].map((x) => ["0%", "50%", "100%"].map((y) => !(x === "50%" && y === "50%") && <Handle key={x + y} $x={x} $y={y} />))}
      <Rotate><svg width="26" height="22" viewBox="0 0 26 22"><path d="M18 17a8.500 8.500 0 1 1 2.500-7M15 13a4 4 0 1 1 1.500-3" fill="none" stroke="#606060" strokeWidth="2" /><path d="M13 10h12l-6 7z" fill="#fff" stroke="#606060" strokeWidth="1.500" /></svg></Rotate>
    </Frame>
  );
}

function PowerPoint() {
  return (
    <Ppt>
      <TitleBar>
        {apps.ppt(17)}
        <Auto>AutoSave<Switch>Off</Switch></Auto>
        <Quick><button aria-label="Save"><Save size={19} strokeWidth={1.500} /></button><button aria-label="Undo"><Undo2 size={19} strokeWidth={1.500} /></button><Chev s={8} /><button aria-label="Redo"><RotateCw size={18} strokeWidth={1.500} /></button><button aria-label="From beginning"><Presentation size={18} strokeWidth={1.500} /></button><Spacer /><Chev s={9} /><Spacer /></Quick>
        <FileName>{"Presentation1  -  PowerPoint"}</FileName>
        <TopSearch><Search size={16} strokeWidth={1.500} /><input aria-label="Search" placeholder="Search" /></TopSearch>
        <Spacer /><Avatar $s={26} />
        <WinBtns><button aria-label="Minimise"><Minus size={12} /></button><button aria-label="Restore"><Copy size={12} /></button><button aria-label="Close"><X size={14} /></button></WinBtns>
      </TitleBar>
      <TabsRow>
        {menu.map((t) => <Tab key={t}>{t}</Tab>)}<Tab $c $on>Video Format</Tab><Tab $c>Playback</Tab>
        <Spacer />
        <Actions><ActBtn><CircleDot size={14} />Record</ActBtn><ActBtn>{apps.teamsMono(14)}Present in Teams</ActBtn><ActBtn aria-label="Comments"><MessageSquare size={14} strokeWidth={1.500} /></ActBtn><ActBtn $red><SquareArrowOutUpRight size={13} />Share<Chev /></ActBtn></Actions>
      </TabsRow>
      <Shell>
        <PptRibbon />
        <Warning>
          <svg width="15" height="18" viewBox="0 0 15 18"><path d="M7.500 1Q10 3 14 3v6q0 5-6.500 8Q1 14 1 9V3q4 0 6.500-2z" fill="#f9d98c" stroke="#e07207" strokeWidth="1.400" /><path d="M7.500 5v5M7.500 12v1.500" stroke="#333" strokeWidth="1.300" /></svg>
          <b>SECURITY WARNING</b><a href="#details">Some active content has been disabled. Click for more details.</a><Enable>Enable Content</Enable><Spacer /><X size={13} />
        </Warning>
      </Shell>
      <Work>
        <Thumbs><ThumbNo>1<span>★</span></ThumbNo><Thumb><Mini><MiniBar $h={5} $c="#e4e4e4" /><MiniBar $h={3} $c="#fff" /><MiniBar $h={3} $c="#000" /><MiniRows /><MiniBar $h={4} $c="#dbe4f5" /></Mini></Thumb></Thumbs>
        <Editor>
          <SlideWrap><Slide><Recording />
            <Player><button aria-label="Play"><svg width="16" height="19"><path d="M0 0l15 9.500L0 19z" fill="#666" /></svg></button><Track /><button aria-label="Step back"><svg width="11" height="9"><path d="M8 0v9L0 4.500zM9 0h2v9H9z" fill="#666" /></svg></button><Gap $w={25} /><button aria-label="Step forward"><svg width="11" height="9"><path d="M3 0v9l8-4.500zM0 0h2v9H0z" fill="#666" /></svg></button><Gap $w={29} />00:00.00<Gap $w={13} /><Volume2 size={18} fill="#666" color="#666" /></Player>
          </Slide></SlideWrap>
          <Notes>Click to add notes</Notes>
        </Editor>
      </Work>
      <Status>
        Slide 1 of 1<SBtn $m={20} aria-label="Spelling"><BookOpen size={15} /></SBtn><SBtn $m={19}><Accessibility size={16} /><b>Accessibility: Investigate</b></SBtn><Spacer />
        <SBtn><Menu size={16} />Notes</SBtn><SBtn $m={17}><MonitorCog size={16} />Display Settings</SBtn>
        <SBtn $m={18} $cell $on aria-label="Normal"><PanelsTopLeft size={16} /></SBtn><SBtn $cell aria-label="Slide sorter"><LayoutGrid size={16} /></SBtn><SBtn $cell aria-label="Reading view"><BookOpen size={16} /></SBtn><SBtn $cell aria-label="Slide show"><Presentation size={16} /></SBtn>
        <SBtn $m={4} aria-label="Zoom out"><Minus size={11} /></SBtn><Zoom type="range" aria-label="Zoom" defaultValue="53" /><SBtn aria-label="Zoom in"><Plus size={12} /></SBtn><SBtn $m={12}>118%</SBtn><SBtn $m={12} aria-label="Fit"><Maximize2 size={15} /></SBtn>
      </Status>
      <Taskbar size="lg" time="08:37" tray />
    </Ppt>
  );
}

/* -------------------------------------------------------- UiPath Studio */
const Second = styled.section`flex: 1; min-width: 0; background: #000;`;
const Studio = styled.div`width: 100%; aspect-ratio: 16 / 9; display: flex; flex-direction: column; background: #2d2e32; color: #e6e6e6; font: 8px/11px ${SMALL};`;
const STitle = styled.header`position: relative; height: 20px; flex: none; border-bottom: 1px solid #45464b; display: flex; align-items: center; padding: 0 9px 0 0;`;
const STab = styled.button`padding: 0 7px; line-height: 19px; ${(p) => p.$on && css`position: relative; color: #fff; &::after { content: ""; position: absolute; left: 7px; right: 7px; bottom: 2px; height: 1px; background: #38a8f5; }`}`;
const SName = styled.div`flex: 1; text-align: center; padding-left: 32px;`;
const SIcons = styled.div`display: flex; align-items: center; gap: 12px; span { font-weight: 700; } ${(p) => p.$low && css`align-self: flex-end; padding: 0 16px 4px 0; gap: 20px;`}`;
const SRibbon = styled.div`position: relative; flex: none; display: flex; height: 54px; background: #232325; border-bottom: 1px solid #414247; padding: 4px 0 3px;`;
const SSec = styled.div`width: ${(p) => p.$w}px; border-right: 1px solid #45464b; display: flex; justify-content: center;`;
const SBig = styled.button`width: ${(p) => p.$w}px; color: ${(p) => (p.$on ? "#e6e6e6" : "#77787b")}; display: flex; flex-direction: column; align-items: center; svg.top { height: 17px; margin-bottom: 1px; } span { display: flex; gap: 1px; align-items: center; min-height: 11px; }`;
const SCol = styled.div`display: flex; flex-direction: column; width: ${(p) => p.$w}px; color: #77787b; button { display: flex; align-items: center; gap: 3px; height: 17px; margin-top: -2px; margin-bottom: 2px; }`;
const SBody = styled.div`flex: 1; min-height: 0; display: flex; padding: 4px 4px 0; position: relative;`;
const Left = styled.aside`width: 254px; display: flex; flex-direction: column; margin-right: 4px;`;
const Panel = styled.div`flex: 1; min-height: 0; border: 1px solid #45464b; background: #232325; display: flex; flex-direction: column;`;
const PHead = styled.div`height: 15px; flex: none; background: ${(p) => (p.$blue ? "#1769bc" : "#2d2e32")}; display: flex; align-items: center; gap: 6px; padding: 0 4px; &::before { content: "${(p) => p.$t}"; order: -2; }`;
const Dots = styled.i`flex: 1; order: -1; height: 5px; background: radial-gradient(circle, ${(p) => p.$c || "#5c5d62"} 0 30%, transparent 35%) 0 0 / 3px 3px;`;
const PTools = styled.div`height: 20px; flex: none; display: flex; align-items: center; padding: 0 8px 0 7px; gap: 8px; border-bottom: 1px solid #45464b; svg { color: #ccc; }`;
const PSearch = styled.label`height: 15px; flex: none; display: flex; align-items: center; gap: 5px; padding: 0 2px; border-bottom: 1px solid #65666b; input { border: 0; background: none; padding: 0; font-style: italic; width: 100%; } input::placeholder { color: #999; opacity: 1; }`;
const Tree = styled.ul`list-style: none; margin: 1px 0 0; padding: 0; height: 323px; display: grid; grid-auto-rows: 1fr;`;
const Leaf = styled.li`display: flex; align-items: center; padding-left: ${(p) => p.$d * 13}px; font-weight: ${(p) => (p.$b ? 700 : 400)};`;
const Slot = styled.span`width: ${(p) => p.$w}px; display: flex; justify-content: center; flex: none;`;
const BTabRow = styled.div`height: 14px; flex: none; display: flex; gap: 2px; ${(p) => p.$lift && css`margin-bottom: 171px;`}`;
const BotTab = styled.button`display: flex; align-items: center; gap: 3px; padding: 0 4px; flex: ${(p) => (p.$f ? 1 : "none")}; ${(p) => p.$on && css`color: #2e95e8; border: 1px solid #45464b; border-top: 0; background: #28292c;`} svg { color: #ccc; }`;
const Designer = styled.main`flex: 1; min-width: 0; display: flex; flex-direction: column; border-left: 1px solid #45464b; margin-bottom: 1px;`;
const DTabs = styled.div`height: 17px; flex: none; display: flex; border-bottom: 2px solid #4b4d55; align-items: center; padding-right: 3px;`;
const DTab = styled.button`height: 15px; display: flex; align-items: center; gap: 6px; padding: 0 4px; ${(p) => p.$on && css`background: #4b4d55; width: 39px;`}`;
const Crumb = styled.div`height: 18px; flex: none; background: #232325; border-bottom: 1px solid #3b3c40; padding: 3px 7px;`;
const DMid = styled.div`flex: 1; min-height: 0; display: flex;`;
const Canvas = styled.div`position: relative; flex: 1; min-width: 0; overflow: hidden; background: radial-gradient(circle at 3px 3px, #2d2e31 0 1px, transparent 1px) 0 0 / 7px 7px #232325;`;
const VBar = styled.div`width: 11px; display: flex; flex-direction: column; align-items: center; justify-content: space-between; padding: 2px 0; i { width: 7px; flex: 0 0 73%; background: #4b4d55; margin-bottom: auto; }`;
const HBar = styled.div`height: 11px; flex: none; display: flex; align-items: center; gap: 2px; padding: 0 12px 0 2px; i { height: 9px; flex: 0 0 81%; background: #4b4d55; margin-right: auto; }`;
const DFoot = styled.div`height: 17px; flex: none; border-top: 2px solid #232325; border-bottom: 1px solid #45464b; display: flex; align-items: center; padding: 0 2px 0 4px; gap: 12px;`;
const Right = styled.aside`width: 233px; margin-left: 5px; display: flex; flex-direction: column;`;
const PType = styled.div`background: #2d2e32; padding: 5px 2px 6px;`;
const PTable = styled.table`width: 100%; border-collapse: collapse; table-layout: fixed; th, td { height: 14px; padding: 0 0 0 4px; text-align: left; font-weight: 400; } .cat th { font-weight: 700; background: #2d2e32; padding-left: 1px; } .cat svg { display: inline-block; margin-right: 4px; vertical-align: -1px; } th.g { background: #2d2e32; width: 9px; padding: 0; } td input[type="text"] { width: 100%; height: 13px; border: 1px solid #55565b; background: none; padding: 0 1px; } td input[type="checkbox"] { width: 9px; height: 9px; margin: 0; appearance: none; background: #fff; border: 1px solid #777; }`;
const Float = styled.div`position: absolute; right: 5px; bottom: 1px; width: 238px; height: 165px; background: #232325; border: 1px solid #45464b; display: flex; flex-direction: column;`;
const FTools = styled.div`height: 21px; flex: none; border-bottom: 1px solid #66676b; display: flex; justify-content: flex-end; align-items: flex-end; padding: 2px;`;
const FLine = styled.div`height: 16px; flex: none; border-bottom: 1px solid #66676b;`;
const FList = styled.div`flex: 1; min-height: 0; display: flex; > div:first-child { flex: 1; display: flex; flex-direction: column; justify-content: flex-end; padding-bottom: 20px; } > div:first-child::after { content: ""; height: 13px; background: #434547; border-bottom: 1px solid #aaa; }`;
const FBar = styled.div`width: 11px; background: #2d2e32; display: flex; flex-direction: column; align-items: center; padding: 2px 0; i { width: 7px; height: 74px; margin: 20px 0 auto; background: #4b4d55; }`;
const Errors = styled.div`height: 22px; flex: none; display: flex; gap: 8px; padding: 6px 4px 0; color: #a9adb5; button { border-bottom: 5px solid #44464a; display: block; height: 16px; line-height: 11px; }`;
const SStatus = styled.div`height: 16px; flex: none; background: #1769bc; color: #fff; display: flex; align-items: center; justify-content: flex-end; padding: 0 10px; gap: 12px; span { display: flex; align-items: center; gap: 3px; } svg { opacity: .8; }`;

const Node = styled.article`position: absolute; left: ${(p) => p.$x}px; top: ${(p) => p.$y}px; width: ${(p) => p.$w}px; height: ${(p) => p.$h}px; background: #232325; border: 1px solid #3d3e42; display: flex; flex-direction: column;`;
const NHead = styled.header`height: 16px; flex: none; background: #2b2c2f; border-left: 2px solid #1787e0; margin-left: -1px; display: flex; align-items: center; gap: 10px; padding: 0 3px 0 4px; font-weight: 700; svg:last-child { margin-left: auto; }`;
const NBody = styled.div`display: flex; gap: 4px; padding: 4px 4px 0 5px; color: #97989b; white-space: pre-line; line-height: 11px;`;
const NFoot = styled.footer`margin-top: auto; display: flex; align-items: center; gap: 3px; padding: 0 4px 6px 5px; height: 19px;`;
const Steps = styled.svg`margin: 3px 0 0 auto; align-self: flex-end;`;
const Pill = styled.span`position: absolute; left: ${(p) => p.$x}px; top: ${(p) => p.$y}px; transform: translate(-50%, -50%); width: ${(p) => p.$w}px; height: 13px; border: 1px solid #c4c6cc; border-radius: 7px; background: #232325; color: #e6e6e6; text-align: center; line-height: 11px; overflow: hidden; ${(p) => p.$cut && css`border-right: 0; border-radius: 7px 0 0 7px;`}`;
const Lines = styled.svg`position: absolute; inset: 0; width: 100%; height: 100%; path { fill: none; stroke: #c6cad8; stroke-width: 1.4; } .w { stroke-width: 3; } .a { fill: #b4b5b9; stroke: none; } .go { fill: #0b66e4; stroke: none; } circle.p { fill: #2d2e32; stroke: #3d3e42; }`;

const nodes = [
  [322, 27, 142, 102, "Determine Run Type", "If attended, present user with\npop-up to confirm robotic\nprocess start. Also allow user\nto confirm single, or multiple\ntransaction processing."],
  [316, 192, 154, 80, "Initialization", "Read configuration file and\ninitialize applications used in the\nprocess."],
  [13, 326, 99, 80, "End Process", "End process and\nclose all\napplications used."],
  [134, 325, 143, 90, "End Process Confirmation", "Confirm that the user has\nfinished processing all cases\nand has no more to add to the\nqueue."],
  [317, 329, 152, 73, "Get Transaction Data", "Get the next transaction to be\nprocessed."],
  [324, 475, 139, 179, "Process Transaction", "Process a single transaction.\nThe result of the processing\ncan be:\n\n1) Success\n2) Business Exception\n3) System Exception\n4) Last Transaction\n\nIn the case of a system\nexception, the transaction can\nbe automatically retried."],
];
const pills = [
  [213, 149, 51, "Stop Process"], [393, 170, 51, "Start Process"], [165, 228, 11, "Sy", true], [198, 228, 56, "Business Exc..."], [261, 252, 57, "Continue - S..."],
  [152, 305, 48, "End Process"], [281, 305, 39, "Continue"], [393, 310, 43, "Successful"], [311, 421, 36, "No Data"], [393, 438, 59, "New Transact..."],
  [491, 452, 56, "System Exce..."], [490, 523, 34, "Success"], [490, 511, 56, "Business Exc..."], [184, 545, 59, "Last Transacti..."],
];
const down = (x, y) => `M${x - 3} ${y - 7}h6l-3 7z`;
const up = (x, y) => `M${x - 3} ${y + 7}h6l-3-7z`;
const left = (x, y) => `M${x + 7} ${y - 3}v6l-7-3z`;
const right = (x, y) => `M${x - 7} ${y - 3}v6l7-3z`;

function Diagram() {
  return (
    <Canvas>
      <Lines>
        <path d="M228 66H245Q248 66 248 70Q248 73 251 73H318" /><path className="a" d={right(323, 73)} />
        <path d="M393 129V190M393 146Q393 149 390 149H35Q32 149 32 152V322" /><path className="a" d={down(393, 192)} /><path className="a" d={down(32, 326)} />
        <path d="M316 228H60Q57 228 57 231V322M80 228Q77 228 77 231V322" /><path className="a" d={down(57, 326)} /><path className="a" d={down(77, 326)} />
        <path d="M206 324V255Q206 252 209 252H312M203 305H100Q97 305 97 308V322M206 308Q206 305 203 305M206 308Q206 305 209 305H352Q355 305 355 308V325" /><path className="a" d={right(316, 252)} /><path className="a" d={down(97, 326)} /><path className="a" d={down(355, 329)} />
        <path d="M393 272V326M393 402V472M393 418Q393 421 390 421H227V418" /><path className="a" d={down(393, 329)} /><path className="a" d={down(393, 475)} /><path className="a" d={up(227, 415)} />
        <path d="M400 654V671Q400 674 397 674H187Q184 674 184 671V419" /><path className="a" d={up(184, 415)} />
        <path d="M490 452V235Q490 232 487 232H474M490 354Q490 351 487 351H474M490 375Q490 372 487 372H474" /><path className="w" d="M401 656V671H490V452" />
        <path className="a" d={left(470, 232)} /><path className="a" d={left(469, 351)} /><path className="a" d={left(469, 372)} />
        <circle cx="210" cy="66" r="16" fill="#232325" stroke="#45464b" /><path className="go" d="M207 59v15l10-7.500z" />
      </Lines>
      {nodes.map(([x, y, w, h, t, d]) => (
        <Node key={t} $x={x} $y={y} $w={w} $h={h}>
          <NHead><svg width="11" height="10" viewBox="0 0 11 10" fill="none" stroke="#ccc"><path d="M1 4V1h9v8.500H5" /><path d="M1 1.500h9" strokeWidth="2" /><circle cx="2.500" cy="6.500" r="1.300" /><path d="M2.500 8v2" /></svg>{t}<svg width="3" height="9"><circle cx="1.500" cy="1.500" r=".8" fill="#ccc" /><circle cx="1.500" cy="4.500" r=".8" fill="#ccc" /><circle cx="1.500" cy="7.500" r=".8" fill="#ccc" /></svg></NHead>
          <NBody><MessageSquareText size={9} color="#bbb" />{d}</NBody>
          <NFoot><svg width="11" height="11" viewBox="0 0 11 11" fill="none"><path d="M1 3V1h9v9H1V8" stroke="#ccc" /><path d="M0 5.500h7M5 3l2.500 2.500L5 8" stroke="#5fb336" strokeWidth="1.300" /></svg>Entry<Steps width="8" height="7"><path d="M0 5h2v2H0zM3 5h2v2H3zM6 5h2v2H6zM3 2.500h2v2H3zM6 2.500h2v2H6zM6 0h2v2H6z" fill="#ccc" /></Steps></NFoot>
        </Node>
      ))}
      <Lines><circle className="p" cx="393" cy="129" r="3.500" /><circle className="p" cx="316" cy="228" r="3.500" /><circle className="p" cx="393" cy="272" r="3.500" /><circle className="p" cx="206" cy="324" r="3.500" /><circle className="p" cx="393" cy="402" r="3.500" /><circle className="p" cx="400" cy="654" r="3.500" /></Lines>
      {pills.map(([x, y, w, t, cut], i) => <Pill key={i} $x={x} $y={y} $w={w} $cut={cut}>{t}</Pill>)}
    </Canvas>
  );
}

const B = ({ c = "#1787e0" }) => <svg width="11" height="13" viewBox="0 0 11 13"><path d="M1 0v13M1 6h4" stroke="#77787b" /><rect x="4" y="3" width="7" height="7" rx="1" fill={c} /></svg>;
const F = <Folder size={11} strokeWidth={2} />;
const json = <File size={11} color="#aaa" />;
const xaml = <svg width="8" height="10" viewBox="0 0 8 10"><path d="M0 0h5l3 3v7H0z" fill="#1787e0" /><path d="M2 4v2.500h1.500V4M5.500 4v3" fill="none" stroke="#fff" strokeWidth=".8" /></svg>;
const pen = <Pencil size={6} color="#e0a030" fill="#e0a030" />;
const tree = [
  [0, "v", pen, <Settings size={11} color="#1787e0" />, "Phytosanitary Certificates"],
  [1, "v", null, <FolderTree size={11} color="#888" />, "Dependencies (Windows)"],
  [2, ">", null, <B c="#d08410" />, "DRACOE.Logging.64 = 1.0.9"], [2, ">", null, <B />, "DRACOE.Microsoft.Graph.64 = 1.0.46"], [2, "", null, <B />, "DRACOE.PopUps.64 = 1.0.9"],
  [2, "", null, <B />, "UiPath.Excel.Activities = 2.23.5"], [2, "", null, <B />, "UiPath.Mail.Activities = 1.23.11"], [2, "", null, <B />, "UiPath.System.Activities = 24.10.4"],
  [2, "", null, <B />, "UiPath.Testing.Activities = 23.10.1"], [2, "", null, <B />, "UiPath.UIAutomation.Activities = 23.10.13"], [2, "", null, <B />, "UiPath.WebAPI.Activities = 1.21.1"],
  [1, "", null, <Database size={11} color="#1787e0" />, "Entities"], [1, "", null, <Files size={11} />, "Templates"], [1, ">", pen, F, "Assets"], [1, "", null, F, "Enter Location"], [1, ">", pen, F, "Framework"], [1, ">", pen, F, "Process"],
  [1, "", "+", json, "bindings_v2.json"], [1, "", "+", json, "bindings.json"], [1, "", "+", xaml, "GlobalExceptionHandler.xaml"], [1, ">", pen, xaml, "Main.xaml"], [1, "", pen, json, "project.json"],
];
const Tool = ({ icon: I, w, on, l, chev, ...r }) => (
  <SBig $w={w} $on={on}><I className="top" size={15} strokeWidth={1.500} {...r} />{l.map((t, i) => <span key={t}>{t}{chev === "in" && i === l.length - 1 && <Chev s={5} />}</span>)}{chev === "below" && <span><Chev s={6} /></span>}</SBig>
);
const Explorer = ({ className }) => <svg className={className} width="15" height="17" viewBox="0 0 15 17"><path d="M7.500 0L15 4v9l-7.500 4L0 13V4z" fill="#0a8cf0" /><path d="M4 5h7M4 11h7M4 5v3h7v3M7.500 5v6" stroke="#fff" fill="none" /></svg>;

function UiPath() {
  return (
    <Second>
      <Studio>
        <STitle><STab>HOME</STab><STab $on>DESIGN</STab><STab>DEBUG</STab><SName>Phytosanitary Certificates - UiPath Studio</SName>
          <SIcons><Search size={9} /><UserRound size={9} /><CircleHelp size={9} /><span>WS</span><Minus size={8} /><Gap $w={0} /><Copy size={7} /><Gap $w={0} /><X size={9} /></SIcons></STitle>
        <SRibbon>
          <SSec $w={126}><Tool icon={FilePlus} w={32} l={["New"]} chev="below" /><Tool icon={Save} w={27} on l={["Save"]} chev="below" color="#aaa" /><Tool icon={FileOutput} w={36} on l={["Export", "As"]} chev="in" /><SBig $w={26} $on><svg className="top" width="15" height="15" viewBox="0 0 15 15"><rect width="15" height="15" fill="#0a8cf0" /></svg><span>Stop</span></SBig></SSec>
          <SSec $w={83}><SCol $w={39}><button><Scissors size={8} />Cut</button><button><Copy size={9} />Copy</button><button><ClipboardPaste size={9} />Paste</button></SCol><SCol $w={36}><button><Undo2 size={8} />Undo</button><button><Redo2 size={8} />Redo</button></SCol></SSec>
          <SSec $w={48}><Tool icon={Package} l={["Manage", "Packages"]} /></SSec>
          <SSec $w={44}><Tool icon={Database} l={["Manage", "Entities"]} /></SSec>
          <SSec $w={55}><Tool icon={FlaskConical} on l={["Test", "Manager"]} chev="in" /></SSec>
          <SSec $w={183}><Tool icon={CircleDot} w={46} l={["App/Web", "Recorder"]} /><Tool icon={Video} w={44} l={["Computer", "Vision"]} /><Tool icon={MousePointerClick} w={44} l={["User", "Events"]} chev="in" /><Tool icon={Table2} w={44} l={["Table", "Extraction"]} /></SSec>
          <SSec $w={44}><Tool icon={Explorer} on l={["UI", "Explorer"]} /></SSec>
          <SSec $w={51}><Tool icon={CircleX} l={["Remove", "Unused"]} chev="in" /></SSec>
          <SSec $w={44}><Tool icon={Stethoscope} l={["Analyze", "File"]} chev="in" color="#ccc" /></SSec>
          <SSec $w={42}><Tool icon={FileSpreadsheet} l={["Export", "to Excel"]} /></SSec>
          <SSec $w={43}><Tool icon={Upload} on l={["Publish"]} chev="below" color="#77787b" /></SSec>
          <Spacer /><SIcons $low><ChevronUp size={8} /><Pin size={8} /></SIcons>
        </SRibbon>
        <SBody>
          <Left>
            <Panel>
              <PHead $t="Project"><Dots /><Chev s={7} /><Pin size={8} /></PHead>
              <PTools><SquarePlus size={11} /><SquareMinus size={11} /><RefreshCw size={11} /><ArrowLeftRight size={11} /><Folder size={11} fill="#ccc" /><Settings size={11} strokeWidth={3} /><Funnel size={10} /></PTools>
              <PSearch><Search size={10} /><input aria-label="Search project" placeholder="Search project (Ctrl+Alt+P)" /></PSearch>
              <Tree>{tree.map(([d, a, m, icon, t]) => (
                <Leaf key={t} $d={d} $b={t === "Main.xaml"}><Slot $w={13}>{a === "v" ? <Chev s={7} /> : a === ">" ? <ChevronRight size={8} /> : null}</Slot>
                  <Slot $w={8}>{m === "+" ? <svg width="5" height="6"><path d="M0.500 0v6M1 3h4" stroke="#ccc" /></svg> : m}</Slot><Slot $w={15}>{icon}</Slot>{t}</Leaf>))}</Tree>
            </Panel>
            <BTabRow><BotTab $on><Folder size={10} />Project</BotTab><BotTab><BriefcaseBusiness size={10} />Activities</BotTab><BotTab><Files size={10} />Snippets</BotTab></BTabRow>
          </Left>
          <Designer>
            <DTabs><DTab $on>Main<X size={8} /></DTab><DTab>Process Transaction</DTab><Spacer /><Chev s={8} /></DTabs>
            <Crumb>Automation Template</Crumb>
            <DMid><Diagram /><VBar><ChevronUp size={8} /><i /><Chev s={8} /></VBar></DMid>
            <HBar><ChevronLeft size={7} /><i /><ChevronRight size={8} /></HBar>
            <DFoot><span>Variables</span><span>Arguments</span><span>Imports</span><Spacer /><Hand size={9} /><Search size={8} />100%<Gap $w={1} /><Chev s={7} /><Maximize2 size={9} /><Blocks size={9} /></DFoot>
          </Designer>
          <Right>
            <Panel>
              <PHead $t="Properties"><Dots /><Chev s={7} /><Pin size={8} /></PHead>
              <PType>System.Activities.Statements.StateMachine</PType>
              <PTable><colgroup><col width="9" /><col width="132" /><col /></colgroup><tbody>
                <tr className="cat"><th colSpan="3"><SquareMinus size={7} />Common</th></tr>
                <tr><th className="g" /><td>DisplayName</td><td><input type="text" aria-label="DisplayName" defaultValue="Automation Template" /></td></tr>
                <tr className="cat"><th colSpan="3"><SquareMinus size={7} />Misc</th></tr>
                <tr><th className="g" /><td>Private</td><td><input type="checkbox" aria-label="Private" /></td></tr>
              </tbody></PTable>
            </Panel>
            <BTabRow $lift><BotTab $f $on><Wrench size={9} />Pr...</BotTab><BotTab $f><BriefcaseBusiness size={9} />Da...</BotTab><BotTab $f><Monitor size={9} />Ob...</BotTab><BotTab $f><ListTree size={9} />Ou...</BotTab><BotTab $f><FlaskConical size={9} />Te...</BotTab><BotTab $f><Sparkles size={9} />Au...</BotTab></BTabRow>
          </Right>
          <Float><PHead $t="" $blue><Dots $c="#4f9be0" /><Chev s={7} /><Pin size={8} /></PHead><FTools><Chev s={5} /></FTools><FLine /><FList><div /><FBar><ChevronUp size={7} /><i /><Chev s={7} /></FBar></FList></Float>
        </SBody>
        <Errors><button>Error List</button><button>Breakpoints &amp; Bookmarks</button></Errors>
        <SStatus><span><Upload size={8} />0<Chev s={5} /></span><span><GitBranch size={8} />03-BatchMover-OF<Chev s={5} /></span><span><Rows3 size={8} />0</span><span><Pencil size={7} />72</span><span><GitBranch size={8} />Phytosanitary Certificates</span><span><GitBranch size={8} />Dev-Will<Chev s={5} /></span><span><Cloud size={8} />Cloud Compatible<Chev s={5} /></span><b>VB, Windows</b></SStatus>
        <Taskbar size="md" time="08:37" />
      </Studio>
    </Second>
  );
}

export default function App() {
  return <Desktop><Global /><PowerPoint /><UiPath /></Desktop>;
}
